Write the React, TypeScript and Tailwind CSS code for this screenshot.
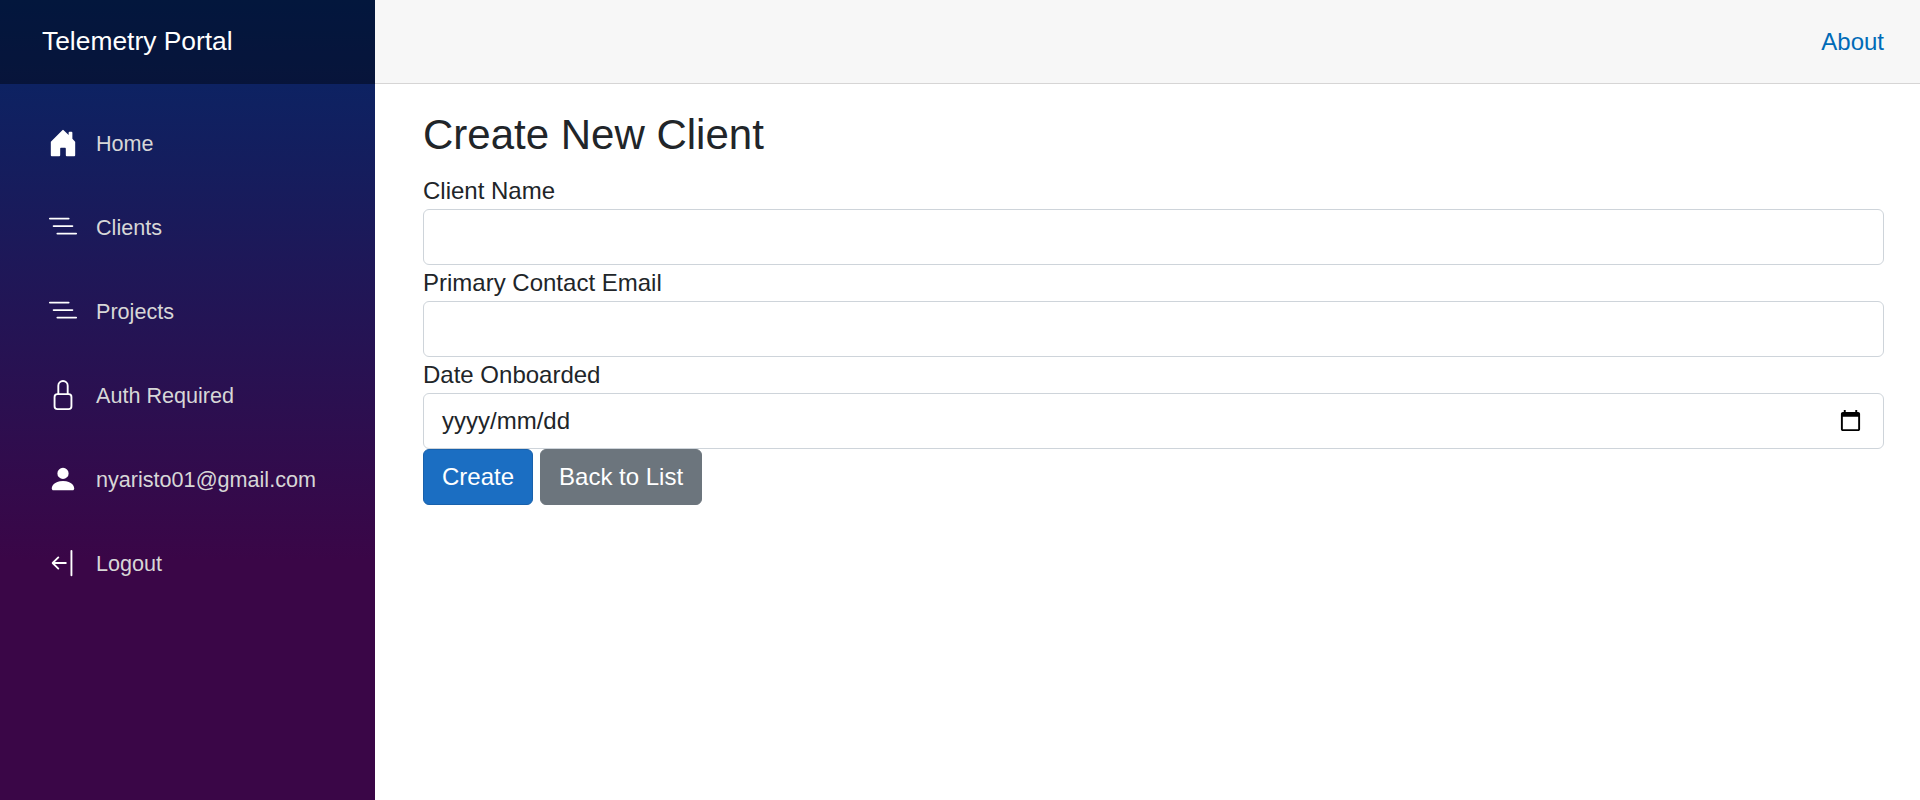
import type { ReactNode } from "react";
import { BsArrowBarLeft, BsHouseDoorFill, BsListNested, BsLock, BsPersonFill } from "react-icons/bs";

function NavItem({ icon, label }: { icon: ReactNode; label: string }) {
  return (
    <li className="pb-3">
      <a href="#" className="flex h-[72px] items-center pl-6 text-[21.6px] leading-7 text-[#d7d7d7]">
        <span className="-mt-0.5 mr-[18px] text-[30px] text-white">{icon}</span>
        <span className="-mt-px">{label}</span>
      </a>
    </li>
  );
}

function Field({ label, children }: { label: string; children?: ReactNode }) {
  return (
    <div>
      <label className="block h-9 leading-9">{label}</label>
      <div className="flex h-14 items-center justify-between rounded-md border border-[#ced4da] bg-white pr-[21px] pl-[18px]">
        {children}
      </div>
    </div>
  );
}

export default function App() {
  return (
    <div className="flex h-[800px] bg-white font-['Liberation_Sans',Arial,sans-serif] text-2xl text-[#212529]">
      <aside className="w-[375px] shrink-0 bg-[linear-gradient(180deg,rgb(5,39,103)_0%,#3a0647_70%)]">
        <div className="flex h-[84px] items-center bg-black/40 pl-[42px]">
          <a href="#" className="text-[26.4px] text-white">Telemetry Portal</a>
        </div>
        <nav className="px-6 pt-6">
          <ul>
            <NavItem icon={<BsHouseDoorFill />} label="Home" />
            <NavItem icon={<BsListNested />} label="Clients" />
            <NavItem icon={<BsListNested />} label="Projects" />
            <NavItem icon={<BsLock />} label="Auth Required" />
            <NavItem icon={<BsPersonFill />} label="nyaristo01@gmail.com" />
            <NavItem icon={<BsArrowBarLeft />} label="Logout" />
          </ul>
        </nav>
      </aside>
      <main className="min-w-0 flex-1">
        <header className="flex h-[84px] items-center justify-end border-b border-[#d6d5d5] bg-[#f7f7f7] pr-9">
          <a href="#" className="text-[#006bb7]">About</a>
        </header>
        <article className="pt-[26px] pr-9 pl-12">
          <h1 className="mb-3 h-[51px] text-[42px] leading-[50px]">Create New Client</h1>
          <form>
            <Field label="Client Name" />
            <Field label="Primary Contact Email" />
            <Field label="Date Onboarded">
              <span>yyyy/mm/dd</span>
              <svg viewBox="0 0 24 24" className="mb-px size-[23px] fill-black">
                <path d="M20 3h-1V1h-2v2H7V1H5v2H4c-1.1 0-2 .9-2 2v16c0 1.1.9 2 2 2h16c1.1 0 2-.9 2-2V5c0-1.1-.9-2-2-2zm0 18H4V8h16v13z" />
              </svg>
            </Field>
            <div className="flex gap-[7px]">
              <button type="button" className="h-14 rounded-md border border-[#1861ac] bg-[#1b6ec2] px-[18px] text-white">Create</button>
              <button type="button" className="h-14 rounded-md border border-[#6c757d] bg-[#6c757d] px-[18px] text-white">Back to List</button>
            </div>
          </form>
        </article>
      </main>
    </div>
  );
}
